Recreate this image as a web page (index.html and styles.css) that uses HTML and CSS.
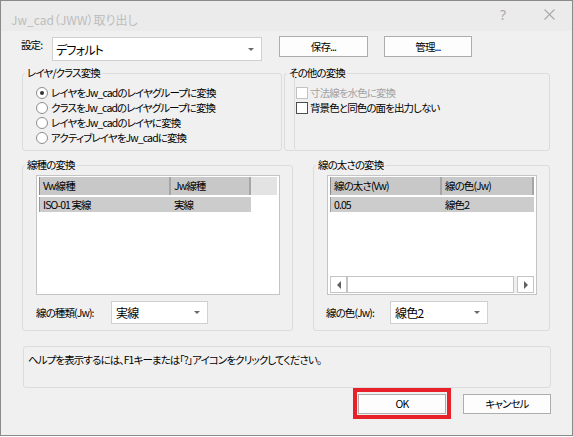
FILE: index.html
```html
<!DOCTYPE html>
<html lang="ja">
<head>
<meta charset="utf-8">
<link rel="stylesheet" href="styles.css">
</head>
<body>
<div class="window">
  <div class="titlebar">
    <span class="title">Jw_cad（JWW）取り出し</span>
    <div class="tb-btns">
      <span class="tb-btn help">?</span>
      <span class="tb-btn"><svg width="11" height="11" viewBox="0 0 11 11"><path d="M0.5 0.5L10.5 10.5M10.5 0.5L0.5 10.5" stroke="#a9a9a9" stroke-width="1.1" fill="none"/></svg></span>
    </div>
  </div>
  <div class="content">
    <div class="row-settings">
      <span class="lbl-set">設定:</span>
      <div class="combo combo-main"><span>デフォルト</span><span class="arrow"></span></div>
      <div class="btn btn-save">保存...</div>
      <div class="btn btn-manage">管理...</div>
    </div>

    <div class="row-groups1">
      <fieldset class="grp grp-layer">
        <legend>レイヤ/クラス変換</legend>
        <div class="grp-body body-layer">
          <div class="opt"><span class="radio on"></span>レイヤをJw_cadのレイヤグループに変換</div>
          <div class="opt"><span class="radio"></span>クラスをJw_cadのレイヤグループに変換</div>
          <div class="opt"><span class="radio"></span>レイヤをJw_cadのレイヤに変換</div>
          <div class="opt"><span class="radio"></span>アクティブレイヤをJw_cadに変換</div>
        </div>
      </fieldset>
      <fieldset class="grp grp-other">
        <legend>その他の変換</legend>
        <div class="inner-frame">
          <div class="opt disabled"><span class="check"></span>寸法線を水色に変換</div>
          <div class="opt"><span class="check"></span>背景色と同色の面を出力しない</div>
        </div>
      </fieldset>
    </div>

    <div class="row-groups2">
      <fieldset class="grp grp-type">
        <legend>線種の変換</legend>
        <div class="grp-body body-list">
          <div class="list list-type">
            <div class="lhead">
              <div class="hcell c1">Vw線種</div>
              <div class="hcell c2">Jw線種</div>
            </div>
            <div class="lrow">
              <div class="rcell c1">ISO-01 実線</div>
              <div class="rcell c2">実線</div>
            </div>
          </div>
          <div class="combo-row">
            <span class="lbl lbl-type">線の種類(Jw):</span>
            <div class="combo combo-small"><span>実線</span><span class="arrow"></span></div>
          </div>
        </div>
      </fieldset>
      <fieldset class="grp grp-width">
        <legend>線の太さの変換</legend>
        <div class="grp-body body-list">
          <div class="list list-width">
            <div class="lhead">
              <div class="hcell w1">線の太さ(Vw)</div>
              <div class="hcell w2">線の色(Jw)</div>
            </div>
            <div class="lrow">
              <div class="rcell w1">0.05</div>
              <div class="rcell w2">線色2</div>
            </div>
            <div class="scrollbar">
              <div class="sb-btn"><span class="tri-left"></span></div>
              <div class="sb-thumb"></div>
              <div class="sb-track"></div>
              <div class="sb-btn"><span class="tri-right"></span></div>
            </div>
          </div>
          <div class="combo-row">
            <span class="lbl lbl-color">線の色(Jw):</span>
            <div class="combo combo-small2"><span>線色2</span><span class="arrow"></span></div>
          </div>
        </div>
      </fieldset>
    </div>

    <div class="helpbox">ヘルプを表示するには、F1キーまたは「?」アイコンをクリックしてください。</div>

    <div class="row-buttons">
      <div class="ok-frame"><div class="btn btn-ok">OK</div></div>
      <div class="btn btn-cancel">キャンセル</div>
    </div>
  </div>
</div>
</body>
</html>
```
FILE: styles.css
```css
* { box-sizing: border-box; }

body {
  margin: 0;
  width: 573px;
  height: 437px;
  background: #ffffff;
  font-family: "Noto Sans CJK JP", sans-serif;
  font-size: 10.5px;
  letter-spacing: -0.9px;
  font-feature-settings: "palt";
  color: #000;
}

.window {
  width: 573px;
  height: 436px;
  border: 1px solid #8a8a8a;
  background: #f0f0f0;
  display: flex;
  flex-direction: column;
}

.titlebar {
  height: 30px;
  flex: none;
  background: #ebebeb;
  display: flex;
  align-items: flex-start;
}

.title {
  margin-left: 10px;
  margin-top: 12px;
  color: #bcbcbc;
  font-size: 12px;
  letter-spacing: 0;
  line-height: 14px;
}

.tb-btns {
  margin-left: auto;
  display: flex;
  height: 27px;
}

.tb-btn {
  width: 46px;
  display: flex;
  align-items: center;
  justify-content: center;
  color: #a9a9a9;
}

.help {
  font-family: "Noto Sans", sans-serif;
  font-size: 14px;
  letter-spacing: 0;
}

.content {
  padding-top: 6px;
  display: flex;
  flex-direction: column;
}

/* settings row */
.row-settings {
  display: flex;
  align-items: flex-start;
  padding-left: 20px;
  height: 24px;
}

.lbl-set {
  width: 31px;
  line-height: 14px;
  padding-top: 1px;
}

.combo {
  background: #fff;
  border: 1px solid #d0d0d0;
  display: flex;
  align-items: center;
  font-size: 12px;
  letter-spacing: -0.8px;
}

.combo-main {
  width: 210px;
  height: 24px;
  padding-left: 3px;
}

.arrow {
  margin-left: auto;
  margin-right: 7px;
  width: 0;
  height: 0;
  border-left: 3px solid transparent;
  border-right: 3px solid transparent;
  border-top: 3px solid #6a6a6a;
}

.btn {
  height: 21px;
  border: 1px solid #adadad;
  background: #fdfdfd;
  display: flex;
  align-items: center;
  justify-content: center;
  line-height: 14px;
}

.btn-save {
  width: 89px;
  margin-left: 17px;
  margin-top: -1px;
}

.btn-manage {
  width: 88px;
  margin-left: 16px;
  margin-top: -1px;
}

/* group boxes */
.grp {
  margin: 0;
  padding: 0;
  min-width: 0;
  border: 1px solid #dcdcdc;
  border-radius: 3px;
}

.grp legend {
  padding: 0 2px;
  margin-left: 2px;
  line-height: 14px;
}

.row-groups1 {
  display: flex;
  margin-top: 5px;
  padding-left: 21px;
}

.grp-layer {
  width: 260px;
  height: 85px;
}

.body-layer {
  padding: 5px 0 0 13px;
}

.grp-other {
  width: 266px;
  height: 85px;
  margin-left: 2px;
  display: flex;
}

.inner-frame {
  flex: 1;
  margin-left: 9px;
  margin-top: -7px;
  border-left: 1px solid #dcdcdc;
  border-bottom-left-radius: 3px;
  padding: 12px 0 0 1px;
}

.opt {
  display: flex;
  align-items: center;
  height: 15px;
  line-height: 13px;
  white-space: nowrap;
}

.radio {
  width: 12px;
  height: 12px;
  border: 1px solid #8d8d8d;
  border-radius: 50%;
  background: #fff;
  margin-right: 3px;
  display: flex;
  align-items: center;
  justify-content: center;
}

.radio.on::after {
  content: "";
  width: 4px;
  height: 4px;
  border-radius: 50%;
  background: #333;
}

.check {
  width: 12px;
  height: 12px;
  border: 1px solid #4d4d4d;
  background: #fff;
  margin-right: 2px;
}

.opt.disabled {
  color: #a3a3a3;
}

.opt.disabled .check {
  border-color: #c2c2c2;
}

/* second row */
.row-groups2 {
  display: flex;
  margin-top: 7px;
  padding-left: 21px;
}

.grp-type {
  width: 271px;
  height: 173px;
}

.grp-width {
  width: 237px;
  height: 173px;
  margin-left: 20px;
}

.body-list {
  padding: 3px 0 0 13px;
}

.list {
  height: 120px;
  border: 1px solid #c4c4c4;
  background: #fff;
  padding: 1px 2px;
  display: flex;
  flex-direction: column;
}

.list-type { width: 244px; }
.list-width { width: 210px; }

.lhead {
  display: flex;
  height: 18px;
  background: #e3e3e3;
}

.hcell {
  background: #c8c8c8;
  border-right: 2px solid #a6a6a6;
  padding-left: 3px;
  line-height: 18px;
  white-space: nowrap;
}

.hcell.c1, .hcell.w1 { border-left: 1px solid #8c8c8c; }

.lrow {
  display: flex;
  margin-top: 2px;
  height: 15px;
  background: #cccccc;
  align-self: flex-start;
}

.rcell {
  padding-left: 3px;
  line-height: 15px;
  white-space: nowrap;
}

.c1 { width: 132px; }
.c2 { width: 80px; }
.w1 { width: 112px; }
.w2 { width: 92px; }

.rcell.c1, .rcell.w1 { border-left: 1px solid #9a9a9a; }

.scrollbar {
  margin-top: auto;
  height: 17px;
  display: flex;
  background: #f0f0f0;
}

.sb-btn {
  width: 17px;
  border: 1px solid #c4c4c4;
  background: #fff;
  display: flex;
  align-items: center;
  justify-content: center;
}

.sb-thumb {
  width: 167px;
  border: 1px solid #c4c4c4;
  background: #fff;
}

.sb-track { flex: 1; }

.tri-left {
  width: 0; height: 0;
  border-top: 4px solid transparent;
  border-bottom: 4px solid transparent;
  border-right: 4px solid #606060;
}

.tri-right {
  width: 0; height: 0;
  border-top: 4px solid transparent;
  border-bottom: 4px solid transparent;
  border-left: 4px solid #606060;
}

.combo-row {
  display: flex;
  align-items: center;
  margin-top: 6px;
}

.lbl { line-height: 14px; white-space: nowrap; }
.lbl-type { width: 75px; }
.lbl-color { width: 64px; margin-left: -1px; }

.combo-small {
  width: 97px;
  height: 23px;
  padding-left: 4px;
}

.combo-small2 {
  width: 98px;
  height: 23px;
  padding-left: 4px;
}

/* help box */
.helpbox {
  margin-top: 15px;
  margin-left: 22px;
  width: 528px;
  height: 42px;
  border: 1px solid #dcdcdc;
  border-radius: 3px;
  padding: 6px 0 0 4px;
  line-height: 14px;
}

/* bottom buttons */
.row-buttons {
  display: flex;
  justify-content: flex-end;
  align-items: flex-start;
  padding-right: 21px;
}

.ok-frame {
  border: 4px solid #e8202a;
  padding: 2px 1px 1px 1px;
}

.btn-ok {
  width: 88px;
  height: 20px;
}

.btn-cancel {
  width: 88px;
  height: 20px;
  margin-left: 12px;
  margin-top: 6px;
}
```
